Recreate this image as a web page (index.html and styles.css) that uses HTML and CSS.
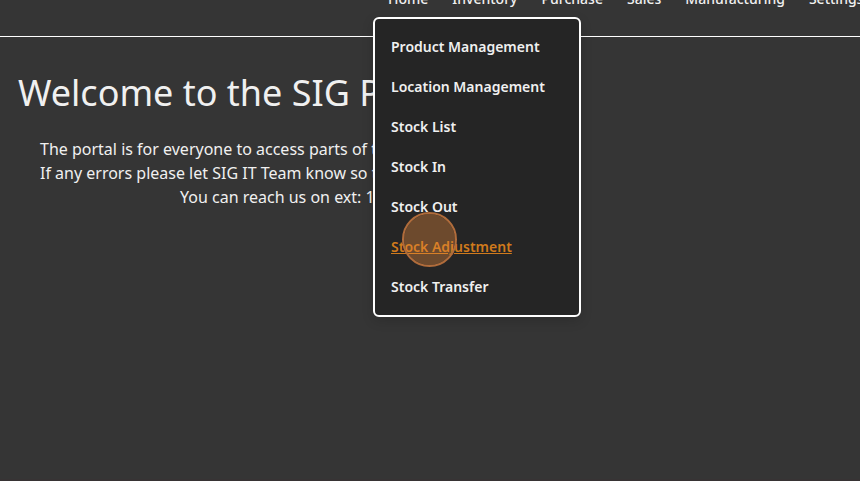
FILE: index.html
```html
<!DOCTYPE html>
<html lang="en">
<head>
<meta charset="utf-8">
<title>SIG Portal</title>
<link rel="stylesheet" href="styles.css">
</head>
<body>
<header class="topbar">
  <nav class="nav" aria-label="Main">
    <a href="#">Home</a>
    <a href="#">Inventory</a>
    <a href="#">Purchase</a>
    <a href="#">Sales</a>
    <a href="#">Manufacturing</a>
    <a href="#">Settings</a>
  </nav>
  <div class="menu">
    <a href="#">Product Management</a>
    <a href="#">Location Management</a>
    <a href="#">Stock List</a>
    <a href="#">Stock In</a>
    <a href="#">Stock Out</a>
    <a href="#" class="active">Stock Adjustment</a>
    <a href="#">Stock Transfer</a>
    <span class="pointer"></span>
  </div>
</header>
<main class="welcome">
  <h1>Welcome to the SIG P</h1>
  <div class="intro">
    <p>The portal is for everyone to access parts of t</p>
    <p>If any errors please let SIG IT Team know so t</p>
    <p class="contact">You can reach us on ext: 1</p>
  </div>
</main>
</body>
</html>
```
FILE: styles.css
```css
* {
  box-sizing: border-box;
}

body {
  display: flex;
  flex-direction: column;
  min-height: 100vh;
  margin: 0;
  overflow: hidden;
  background: #353535;
  border-bottom: 2px solid #373334;
  color: #f0f0f0;
  font: 16px/24px "Noto Sans", sans-serif;
}

a {
  color: inherit;
  text-decoration: none;
}

/* The bar is scrolled partly above the top of the window. */
.topbar {
  position: relative;
  margin-top: -11px;
  padding-bottom: 27px;
  border-bottom: 1px solid #fff;
}

.nav {
  display: flex;
  gap: 24px;
  padding-left: 388px;
  font-size: 14px;
  line-height: 20px;
  font-weight: 500;
  white-space: nowrap;
}

.menu {
  position: absolute;
  z-index: 1;
  top: 28px;
  left: 373px;
  display: flex;
  flex-direction: column;
  width: 208px;
  padding: 8px 0;
  background: #252525;
  border: 2px solid #fff;
  border-radius: 6px;
  box-shadow: 0 4px 12px rgb(0 0 0 / 15%);
  font-size: 14px;
  font-weight: 600;
}

.menu a {
  padding: 8px 16px;
}

.menu .active {
  color: #d07a1c;
  text-decoration: underline;
}

/* Click marker over the highlighted entry. */
.pointer {
  position: absolute;
  top: 193px;
  left: 27px;
  width: 55px;
  height: 55px;
  background: rgb(232 138 60 / 37%);
  border: 2px solid #b06c3b;
  border-radius: 50%;
  background-clip: padding-box;
  pointer-events: none;
}

.welcome {
  padding: 36px 18px;
  white-space: nowrap;
}

h1 {
  margin: 0;
  font-size: 36px;
  font-weight: 400;
  line-height: 40px;
}

.intro {
  padding: 24px 22px;
}

.intro p {
  margin: 0;
}

.intro .contact {
  padding-left: 140px;
}
```
